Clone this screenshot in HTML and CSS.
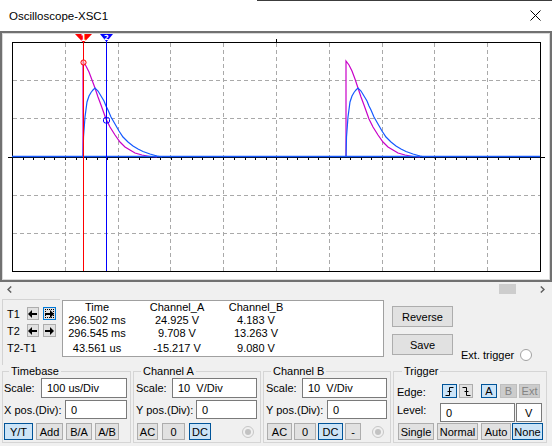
FILE: index.html
```html
<!DOCTYPE html>
<html lang="en">
<head>
  <meta charset="UTF-8">
  <title>Oscilloscope-XSC1</title>
  <link rel="stylesheet" href="styles.css">
</head>
<body>
  <div class="window">
    <div class="titlebar">
      <span class="title">Oscilloscope-XSC1</span>
      <svg class="close" width="11" height="11" viewBox="0 0 11 11"><path d="M0.5 0.5L10.5 10.5M10.5 0.5L0.5 10.5" stroke="#000" stroke-width="1"/></svg>
    </div>

    <div class="screen">
      <div class="screen-in">
        <svg class="plot" width="546" height="245" viewBox="3 34 546 245">
          <!-- grid -->
          <g stroke="#a9a9a9" stroke-dasharray="4 3" shape-rendering="crispEdges">
            <path d="M65.5 43V271M118.5 43V271M170.5 43V271M223.5 43V271M276.5 43V271M329.5 43V271M382.5 43V271M434.5 43V271M487.5 43V271"/>
            <path d="M13 80.5H540M13 118.5H540M13 195.5H540M13 233.5H540"/>
          </g>
          <rect x="12.5" y="42.5" width="528" height="229" fill="none" stroke="#000" shape-rendering="crispEdges"/>
          <!-- axis ticks -->
          <path stroke="#000" shape-rendering="crispEdges" d="M8 157.5H545M276.5 39V43
            M23 157V160M33.5 157V160M44 157V160M54.5 157V160M65.5 157V160M76 157V160M86.5 157V160M97 157V160M107.5 157V160M118 157V160
            M128.5 157V160M139 157V160M150 157V160M160.5 157V160M171 157V160M181.5 157V160M192 157V160M202.5 157V160M213 157V160M223.5 157V160
            M234.5 157V160M245 157V160M255.5 157V160M266 157V160M276.5 157V160M287 157V160M297.5 157V160M308 157V160M318.5 157V160M329.5 157V160
            M340 157V160M350.5 157V160M361 157V160M371.5 157V160M382 157V160M392.5 157V160M403 157V160M414 157V160M424.5 157V160M435 157V160
            M445.5 157V160M456 157V160M466.5 157V160M477 157V160M487.5 157V160M498.5 157V160M509 157V160M519.5 157V160M530 157V160"/>
          <!-- channel A -->
          <g fill="none" stroke="#c800c8" stroke-width="1.2">
            <polyline points="83,157 83,62 86,66 89,72 92,80 95,88 98,97 101,105 106,119 110,127 115,135 120,142 125,147 130,150 135,153 142,155 150,156.5 157,157"/>
            <polyline points="346,157 346,61 349,65 352,71 355,79 358,88 361,97 364,105 369,119 373,127 378,135 383,142 388,147 393,150 398,153 405,155 413,156.5 420,157"/>
          </g>
          <!-- channel B -->
          <g fill="none" stroke="#1459ff" stroke-width="1.2">
            <polyline points="83,157 83.5,137 85,117 87,102 89,96 91,92.5 93,90 95,88 98,91 101,96 104,101 106,106 108,110 111,117 115,124 119,131 123,137 128,142 133,146 138,149 143,151.5 150,154 157,156 162,157"/>
            <polyline points="346,157 346.5,137 348,117 350,102 352,96 354,92.5 356,90 358,88 361,91 364,96 367,101 369,106 371,110 374,117 378,124 382,131 386,137 391,142 396,146 401,149 406,151.5 413,154 420,156 425,157"/>
            <path d="M12 156.5H540" stroke-width="1.4"/>
          </g>
          <!-- cursors -->
          <path d="M83.5 34V271" stroke="#ff0000" shape-rendering="crispEdges"/>
          <path d="M106.5 34V271" stroke="#0000ff" shape-rendering="crispEdges"/>
          <polygon points="75,34 92,34 83.5,43" fill="#ff0000"/>
          <text x="83.5" y="40.5" class="cur-num">1</text>
          <polygon points="100,34 113,34 106.5,42" fill="#0000ff"/>
          <text x="106.5" y="39.5" class="cur-num small">2</text>
          <circle cx="83.5" cy="62.5" r="2.6" fill="#ffc8c8" fill-opacity="0.6" stroke="#ff0000"/>
          <rect x="103.5" y="117.5" width="6" height="5.5" rx="2" fill="none" stroke="#0000ff"/>
        </svg>
      </div>
    </div>

    <div class="hscroll">
      <svg width="5" height="7" viewBox="0 0 5 7"><polyline points="4.2,0.5 1,3.5 4.2,6.5" fill="none" stroke="#606060" stroke-width="1.5"/></svg>
      <div class="thumb"></div>
      <svg class="next" width="5" height="7" viewBox="0 0 5 7"><polyline points="0.8,0.5 4,3.5 0.8,6.5" fill="none" stroke="#606060" stroke-width="1.5"/></svg>
    </div>

    <div class="readout">
      <div class="cursors">
        <div class="crow">
          <span>T1</span>
          <div class="abtn"><svg width="9" height="8" viewBox="0 0 9 8"><polygon points="0,4 4,0 4,3 9,3 9,5 4,5 4,8"/></svg></div>
          <div class="abtn focus"><svg width="9" height="8" viewBox="0 0 9 8"><polygon points="9,4 5,0 5,3 0,3 0,5 5,5 5,8"/></svg></div>
        </div>
        <div class="crow">
          <span>T2</span>
          <div class="abtn"><svg width="9" height="8" viewBox="0 0 9 8"><polygon points="0,4 4,0 4,3 9,3 9,5 4,5 4,8"/></svg></div>
          <div class="abtn"><svg width="9" height="8" viewBox="0 0 9 8"><polygon points="9,4 5,0 5,3 0,3 0,5 5,5 5,8"/></svg></div>
        </div>
        <div class="crow"><span>T2-T1</span></div>
      </div>

      <div class="values">
        <div>Time</div><div>Channel_A</div><div>Channel_B</div>
        <div>296.502 ms</div><div>24.925 V</div><div>4.183 V</div>
        <div>296.545 ms</div><div>9.708 V</div><div>13.263 V</div>
        <div class="delta">43.561 us</div><div class="delta">-15.217 V</div><div class="delta">9.080 V</div>
      </div>

      <div class="actions">
        <div class="btn big">Reverse</div>
        <div class="btn big">Save</div>
      </div>

      <div class="ext">
        <span>Ext. trigger</span>
        <span class="radio"></span>
      </div>
    </div>

    <div class="groups">
      <fieldset class="group timebase">
        <legend>Timebase</legend>
        <div class="row r1"><span>Scale:</span><div class="field" style="width: 86px">100 us/Div</div></div>
        <div class="row r2"><span>X pos.(Div):</span><div class="field" style="width: 62px">0</div></div>
        <div class="row r3 g3">
          <div class="btn on" style="width: 29px">Y/T</div>
          <div class="btn" style="width: 27px">Add</div>
          <div class="btn" style="width: 26px">B/A</div>
          <div class="btn" style="width: 24px">A/B</div>
        </div>
      </fieldset>

      <fieldset class="group chan">
        <legend>Channel A</legend>
        <div class="row r1"><span>Scale:</span><div class="field" style="width: 85px">10&nbsp; V/Div</div></div>
        <div class="row r2"><span>Y pos.(Div):</span><div class="field" style="width: 61px">0</div></div>
        <div class="row r3 g4">
          <div class="btn" style="width: 21px">AC</div>
          <div class="btn" style="width: 23px">0</div>
          <div class="btn on" style="width: 22px">DC</div>
          <svg class="dis-radio" width="12" height="12" viewBox="0 0 12 12"><circle cx="6" cy="6" r="5.5" fill="#f0f0f0" stroke="#c6c6c6"/><circle cx="6" cy="6" r="3" fill="#c2c2c2"/></svg>
        </div>
      </fieldset>

      <fieldset class="group chan">
        <legend>Channel B</legend>
        <div class="row r1"><span>Scale:</span><div class="field" style="width: 85px">10&nbsp; V/Div</div></div>
        <div class="row r2"><span>Y pos.(Div):</span><div class="field" style="width: 60px">0</div></div>
        <div class="row r3 g2">
          <div class="btn" style="width: 25px">AC</div>
          <div class="btn" style="width: 22px">0</div>
          <div class="btn on" style="width: 25px">DC</div>
          <div class="btn" style="width: 16px">-</div>
          <svg class="dis-radio" width="12" height="12" viewBox="0 0 12 12"><circle cx="6" cy="6" r="5.5" fill="#f0f0f0" stroke="#c6c6c6"/><circle cx="6" cy="6" r="3" fill="#c2c2c2"/></svg>
        </div>
      </fieldset>

      <fieldset class="group trigger">
        <legend>Trigger</legend>
        <div class="row r1 edge">
          <span class="tlabel">Edge:</span>
          <div class="btn on small" style="width: 15px"><svg width="9" height="9" viewBox="0 0 9 9"><path d="M0.5 8.5H4.5V0.5H8.5M2.5 4.5H6.5" fill="none" stroke="#000"/></svg></div>
          <div class="btn small" style="width: 14px; margin-left: 2px"><svg width="9" height="9" viewBox="0 0 9 9"><path d="M0.5 0.5H4.5V8.5H8.5M2.5 4.5H6.5" fill="none" stroke="#000"/></svg></div>
          <div class="btn on small" style="width: 16px; margin-left: 8px">A</div>
          <div class="btn off small" style="width: 17px; margin-left: 3px">B</div>
          <div class="btn off small" style="width: 21px; margin-left: 2px">Ext</div>
        </div>
        <div class="row r2 level">
          <span class="tlabel">Level:</span>
          <div class="field" style="width: 75px">0</div>
          <div class="field unit">V</div>
        </div>
        <div class="row r3 modes">
          <div class="btn" style="width: 36px">Single</div>
          <div class="btn" style="width: 41px; margin-left: 3px">Normal</div>
          <div class="btn" style="width: 30px; margin-left: 3px">Auto</div>
          <div class="btn on" style="width: 31px; margin-left: 1px">None</div>
        </div>
      </fieldset>
    </div>
  </div>
</body>
</html>
```

FILE: styles.css
```css
* {
  box-sizing: border-box;
}
html, body {
  margin: 0;
}
body {
  font-family: "Liberation Sans", Arial, sans-serif;
  font-size: 11px;
  color: #000;
  background: #f0f0f0;
}
.window {
  width: 552px;
  height: 446px;
  overflow: hidden;
  background: #f0f0f0;
}
.titlebar {
  height: 31px;
  display: flex;
  align-items: center;
  justify-content: space-between;
  padding: 0 11px 0 9px;
  background: linear-gradient(90deg, transparent 257px, #3c3c3c 257px) top / 100% 1px no-repeat, #fff;
}
.title {
  font-size: 11.5px;
}
.screen {
  height: 251px;
  border: 2px solid #717171;
}
.screen-in {
  height: 100%;
  border: 1px solid #d9d9d9;
  background: #fff;
}
.plot {
  display: block;
}
.cur-num {
  font-family: "DejaVu Sans", sans-serif;
  font-size: 8px;
  font-weight: bold;
  fill: #fff;
  text-anchor: middle;
}
.cur-num.small {
  font-size: 7px;
}
.hscroll {
  height: 14px;
  display: flex;
  align-items: center;
  padding: 0 7px;
}
.thumb {
  margin-left: auto;
  width: 17px;
  height: 10px;
  background: #cdcdcd;
}
.hscroll .next {
  margin-left: 24px;
}
.readout {
  height: 69px;
  display: flex;
  align-items: flex-start;
  padding: 3px 0 0 2px;
}
.cursors {
  width: 58px;
  height: 66px;
  border-top: 1px solid #d3d3d3;
  border-left: 1px solid #d3d3d3;
  padding: 7px 0 0 4px;
}
.crow {
  display: flex;
  align-items: center;
  height: 13px;
  margin-bottom: 4px;
}
.crow span {
  width: 20px;
  white-space: nowrap;
}
.abtn {
  width: 13px;
  height: 13px;
  margin-right: 4px;
  display: flex;
  align-items: center;
  justify-content: center;
  background: #e1e1e1;
  border: 1px solid #adadad;
}
.abtn.focus {
  border-color: #0078d7;
  outline: 1px dotted #000;
  outline-offset: -3px;
}
.values {
  width: 322px;
  height: 57px;
  margin: 1px 0 0 2px;
  border: 1px solid #a0a0a0;
  background: #fff;
  display: grid;
  grid-template-columns: 68px 92px 66px;
  grid-template-rows: 13px 13px 12px 16px;
  line-height: 13px;
  text-align: center;
  white-space: nowrap;
}
.values .delta {
  padding-top: 3px;
}
.actions {
  margin: 7px 0 0 8px;
  display: flex;
  flex-direction: column;
  gap: 7px;
}
.btn {
  height: 17px;
  display: flex;
  align-items: center;
  justify-content: center;
  background: #e1e1e1;
  border: 1px solid #adadad;
  white-space: nowrap;
}
.btn.big {
  width: 61px;
  height: 21px;
}
.btn.small {
  height: 14px;
}
.btn.on {
  background: #cce4f7;
  border-color: #005499;
}
.btn.off {
  background: #cccccc;
  border-color: #bfbfbf;
  color: #838383;
}
.ext {
  margin: 50px 0 0 8px;
  display: flex;
  align-items: center;
  height: 12px;
}
.radio {
  width: 12px;
  height: 12px;
  margin-left: 6px;
  border: 1px solid #a2a2a2;
  border-radius: 50%;
  background: #fff;
}
.groups {
  display: flex;
  gap: 2px;
  padding-left: 2px;
}
.group {
  margin: 0;
  padding: 0 3px 2px 2px;
  border: 1px solid #d5d5d5;
  min-width: 0;
}
.group legend {
  padding: 0 2px;
  margin-left: 5px;
  line-height: 13px;
}
.timebase {
  width: 129px;
  padding-left: 1px;
}
.chan {
  width: 128px;
}
.trigger {
  width: 154px;
  padding-left: 3px;
}
.row {
  display: flex;
  align-items: center;
  justify-content: space-between;
  white-space: nowrap;
}
.r1 {
  height: 20px;
}
.r2 {
  height: 19px;
  margin-top: 2px;
}
.r3 {
  height: 17px;
  margin-top: 4px;
  justify-content: flex-start;
}
.g2 { gap: 2px; }
.g3 { gap: 3px; }
.g4 { gap: 4px; }
.chan .r3 {
  padding-left: 1px;
}
.dis-radio {
  margin-left: auto;
  margin-right: 3px;
}
.field {
  height: 100%;
  display: flex;
  align-items: center;
  padding-left: 5px;
  background: #fff;
  border: 1px solid #7a7a7a;
}
.edge {
  justify-content: flex-start;
  align-items: flex-end;
}
.tlabel {
  width: 45px;
}
.level {
  justify-content: flex-start;
  align-items: flex-start;
  margin-top: 5px;
}
.level .tlabel {
  width: 43px;
  line-height: 14px;
}
.level .unit {
  width: 26px;
  margin-left: 1px;
  padding-left: 8px;
}
.modes {
  margin-top: 1px;
  padding-left: 1px;
}
```
